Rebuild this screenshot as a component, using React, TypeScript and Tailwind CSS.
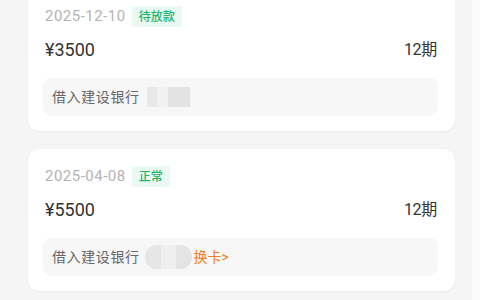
import React from "react";

type Loan = {
  date: string;
  status: string;
  amount: string;
  periods: string;
  bank: string;
  masked: "dots" | "pill";
  changeCard?: boolean;
};

const loans: Loan[] = [
  { date: "2025-12-10", status: "待放款", amount: "¥3500", periods: "12期", bank: "借入建设银行", masked: "dots" },
  { date: "2025-04-08", status: "正常", amount: "¥5500", periods: "12期", bank: "借入建设银行", masked: "pill", changeCard: true },
];

const font = { fontFamily: 'Roboto, "Noto Sans CJK SC", sans-serif' };

function LoanCard({ loan }: { loan: Loan }) {
  return (
    <div className="rounded-[12px] bg-white pl-[15px] pr-[17px] pt-[17px] pb-[15px] shadow-[0_1px_3px_rgba(0,0,0,0.04)]">
      <div className="flex h-[21px] items-center gap-[6px] pl-[2px]">
        <span className="text-[15px] leading-none tracking-[0.5px] text-[#b3b3b3]">{loan.date}</span>
        <span className="flex h-[21px] items-center rounded-[3px] bg-[#e9f8f0] px-[7px] text-[12px] font-medium text-[#22b46c]">
          {loan.status}
        </span>
      </div>
      <div className="mt-[12px] flex h-[22px] items-center justify-between pl-[2px] pr-[1px]">
        <span className="text-[18px] leading-none text-[#333]">{loan.amount}</span>
        <span className="text-[16px] leading-none tracking-[-0.3px] text-[#333]">{loan.periods}</span>
      </div>
      <div className="mt-[17px] flex h-[38px] items-center rounded-[8px] bg-[#f7f7f7] px-[9px]">
        <span className="text-[14px] tracking-[0.6px] text-[#666]">{loan.bank}</span>
        {loan.masked === "dots" ? (
          <span className="ml-[7px] flex h-[20px] items-center">
            <span className="h-[20px] w-[10px] bg-[#e8e8e8]" />
            <span className="h-[20px] w-[11px] bg-[#f1f1f1]" />
            <span className="h-[20px] w-[22px] bg-[#e3e3e3]" />
          </span>
        ) : (
          <span className="ml-[5px] flex h-[24px] w-[47px] overflow-hidden rounded-[12px] bg-[#e9e9e9]">
            <span className="h-full w-[16px] bg-[#e6e6e6]" />
            <span className="h-full w-[15px] bg-[#efefef]" />
            <span className="h-full w-[16px] bg-[#e4e4e4]" />
          </span>
        )}
        {loan.changeCard && (
          <span className="ml-[2px] text-[14px] text-[#f07c22]">换卡&gt;</span>
        )}
      </div>
    </div>
  );
}

export default function App() {
  return (
    <div className="flex h-[300px] w-[480px] overflow-hidden bg-[#fbfbfb]" style={font}>
      <div className="w-[472px] bg-[#f5f5f5] pl-[28px] pr-[17px]">
        <div className="-mt-[11px] flex flex-col gap-[18px]">
          {loans.map((l) => (
            <LoanCard key={l.date} loan={l} />
          ))}
        </div>
      </div>
      <div className="flex-1" />
    </div>
  );
}
